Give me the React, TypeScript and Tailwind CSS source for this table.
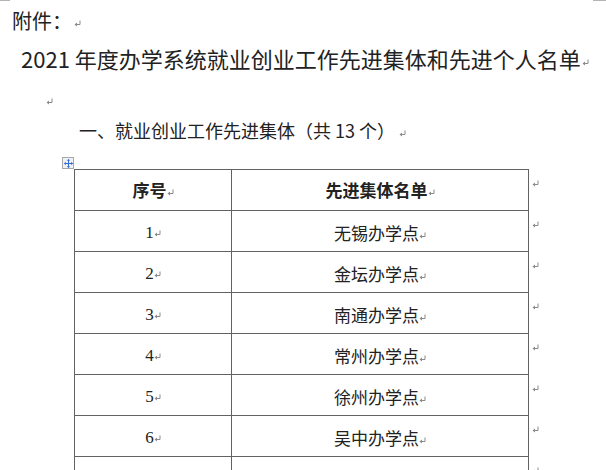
import { Fragment } from "react";

const rows = [
  { no: "1", name: "无锡办学点" },
  { no: "2", name: "金坛办学点" },
  { no: "3", name: "南通办学点" },
  { no: "4", name: "常州办学点" },
  { no: "5", name: "徐州办学点" },
  { no: "6", name: "吴中办学点" },
  { no: "", name: "" },
];

// Word-style paragraph mark
const Mark = ({ className = "inline-block" }: { className?: string }) => (
  <svg width="7" height="7" viewBox="0 0 7 7" className={className}>
    <path d="M6 0.5V4.5H1" fill="none" stroke="#8a8a8a" strokeWidth="1" />
    <path d="M0.5 4.5L3 2.5V6.5Z" fill="#8a8a8a" />
  </svg>
);

const MoveHandle = () => (
  <div className="w-[12px] h-[12px] border border-[#a8a8a8] bg-[#f1f1f1] flex items-center justify-center">
    <svg width="9" height="9" viewBox="0 0 9 9">
      <path d="M4.5 0.5V8.5M0.5 4.5H8.5" stroke="#2f6fd6" strokeWidth="1" />
      <path d="M4.5 0L2.8 1.8H6.2ZM4.5 9L2.8 7.2H6.2ZM0 4.5L1.8 2.8V6.2ZM9 4.5L7.2 2.8V6.2Z" fill="#2f6fd6" />
    </svg>
  </div>
);

// end-of-row mark sitting just outside the right border
const RowEnd = () => (
  <td className="p-0 align-top">
    <div className="h-[40px] pt-[10px] pl-[3px]">
      <Mark className="block" />
    </div>
  </td>
);

export default function App() {
  return (
    <div className="w-[606px] h-[470px] overflow-hidden bg-white text-[#222] font-['Noto_Sans_CJK_SC',sans-serif]">
      <div className="flex justify-between h-[1px]">
        <div className="w-[10px] bg-[#b4b4b4]" />
        <div className="w-[13px] bg-[#b4b4b4]" />
      </div>

      <p className="mt-[10px] pl-[12px] text-[20px] leading-[20px] h-[20px] whitespace-nowrap">
        附件：<Mark className="inline-block ml-[2px]" />
      </p>

      <h1 className="mt-[16px] pl-[21px] text-[22px] leading-[22px] h-[22px] whitespace-nowrap">
        2021 年度办学系统就业创业工作先进集体和先进个人名单<Mark className="inline-block ml-[1px]" />
      </h1>

      <div className="mt-[25px] pl-[46px] h-[10px] leading-[10px]">
        <Mark />
      </div>

      <p className="mt-[17px] pl-[79px] text-[18px] leading-[18px] h-[18px] whitespace-nowrap">
        一、就业创业工作先进集体（共 13 个）<Mark className="inline-block ml-[4px]" />
      </p>

      <div className="mt-[18px] pl-[62px]">
        <MoveHandle />
      </div>

      <table className="ml-[74px] border-collapse text-[17px] font-['Liberation_Serif','Noto_Sans_CJK_SC',serif]">
        <tbody>
          <tr className="h-[41px]">
            <td className="w-[157px] border border-[#626262] text-center font-bold font-['Noto_Sans_CJK_SC',sans-serif]">
              序号<Mark />
            </td>
            <td className="w-[297px] border border-[#626262] text-center font-bold font-['Noto_Sans_CJK_SC',sans-serif]">
              先进集体名单<Mark />
            </td>
            <RowEnd />
          </tr>
          {rows.map((r, i) => (
            <Fragment key={i}>
              <tr className="h-[41px]">
                <td className="border border-[#626262] text-center pt-[3px]">
                  {r.no}
                  {r.no && <Mark />}
                </td>
                <td className="border border-[#626262] text-center pt-[3px] font-['Noto_Sans_CJK_SC',sans-serif]">
                  {r.name}
                  {r.name && <Mark />}
                </td>
                <RowEnd />
              </tr>
            </Fragment>
          ))}
        </tbody>
      </table>
    </div>
  );
}
